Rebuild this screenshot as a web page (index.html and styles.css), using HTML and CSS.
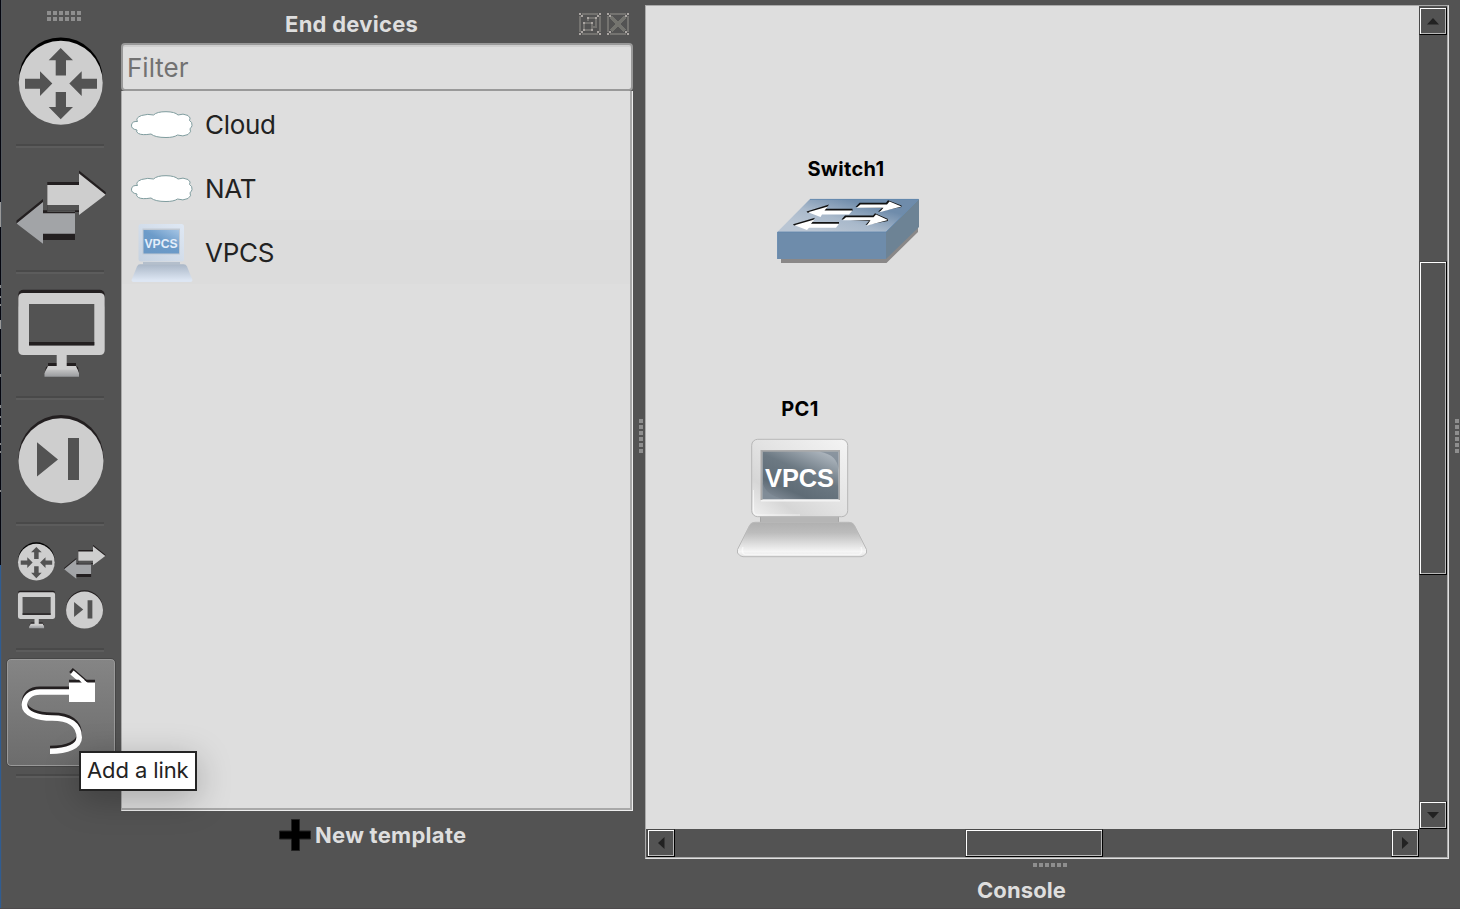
FILE: index.html
```
<!DOCTYPE html>
<html lang="en">
<head>
<meta charset="utf-8">
<title>Network topology</title>
<link rel="stylesheet" href="styles.css">
</head>
<body>
<svg class="defs" width="0" height="0">
  <defs>
    <linearGradient id="foot" x1="0" y1="0" x2="0" y2="1"><stop offset="0" stop-color="#c4c4c5"/><stop offset="1" stop-color="#999b9e"/></linearGradient>
    <linearGradient id="top" x1="0" y1="0.6" x2="0.75" y2="0"><stop offset="0" stop-color="#b9c5d3"/><stop offset="0.35" stop-color="#a9b9cb"/><stop offset="0.8" stop-color="#6f8cab"/></linearGradient>
    <linearGradient id="case" x1="1" y1="0" x2="0" y2="1"><stop offset="0" stop-color="#f4f4f4"/><stop offset="0.5" stop-color="#e2e2e2"/><stop offset="0.75" stop-color="#d6d6d6"/><stop offset="0.95" stop-color="#ececec"/></linearGradient>
    <linearGradient id="base" x1="0" y1="0" x2="0" y2="1"><stop offset="0" stop-color="#b0b0b0"/><stop offset="0.3" stop-color="#bcbcbc"/><stop offset="0.85" stop-color="#f5f5f5"/><stop offset="1" stop-color="#e4e4e4"/></linearGradient>
    <linearGradient id="glass" x1="0.9" y1="0" x2="0.2" y2="1"><stop offset="0" stop-color="#b4bcc4"/><stop offset="0.45" stop-color="#6c7983"/><stop offset="0.8" stop-color="#5f6c76"/><stop offset="1" stop-color="#7d8893"/></linearGradient>
    <linearGradient id="case-blue" x1="1" y1="0" x2="0" y2="1"><stop offset="0" stop-color="#dfe8f4"/><stop offset="1" stop-color="#c6d2e0"/></linearGradient>
    <linearGradient id="base-blue" x1="0" y1="0" x2="0" y2="1"><stop offset="0" stop-color="#aab7c7"/><stop offset="0.9" stop-color="#dde6f3"/></linearGradient>
    <linearGradient id="glass-blue" x1="1" y1="0" x2="0.2" y2="1"><stop offset="0" stop-color="#a4c4e4"/><stop offset="0.5" stop-color="#6c9bc9"/><stop offset="1" stop-color="#6a98c5"/></linearGradient>
    <g id="router">
      <circle cx="60.8" cy="79.4" r="42" fill="#000"/>
      <circle cx="60.8" cy="82.7" r="42" fill="#cecece"/>
      <path fill="#535353" d="M60.7 48 73 60.3H66V75.5H55.7V60.3H48.7ZM60.7 119.3 73 107H66V92H55.7V107H48.7ZM52.3 83.5 40 71.3V78.7H25V88.7H40V96ZM69.3 83.5 81.7 71.3V78.7H97V88.7H81.7V96Z"/>
    </g>
    <g id="switch">
      <path fill="#231f20" d="M47.3 182H79V170.5L105.7 192V195L79 212H47.3ZM75 210.3H43V199L16.5 220.5V223.5L43 240H75Z"/>
      <path fill="#535353" d="M47.3 205H79V210.3H47.3Z"/>
      <path fill="#cecece" d="M47.3 185H79V173.5L105.7 194.7 79 215V205H47.3Z"/>
      <path fill="#a2a4a7" d="M75 213.3H43V202L16.5 223.5 43 243.7V233.7H75Z"/>
    </g>
    <g id="monitor">
      <rect x="18.3" y="289.7" width="86.4" height="20" rx="5" fill="#231f20"/>
      <path fill="#535353" d="M28 303H95V346H28Z"/>
      <path fill="#231f20" d="M48 363H76V366L78 367 79 373H44.7L46 367 48 366Z"/>
      <path fill="#cecece" fill-rule="evenodd" d="M23.3 293H99.7Q104.7 293 104.7 298V350Q104.7 355 99.7 355H66.7V366H76L78 371V376H45.5V371L48 366H56.7V355H23.3Q18.3 355 18.3 350V298Q18.3 293 23.3 293ZM29 304V345.3H94.3V304Z"/>
      <path fill="#231f20" d="M29 342H94.3V345.4H29Z"/>
      <path fill="url(#foot)" d="M46.500 369.500H77.500L79 373V376.7H44.5V373Z"/>
    </g>
    <g id="play">
      <circle cx="61" cy="457.5" r="42.5" fill="#231f20"/>
      <circle cx="61" cy="460.7" r="42.5" fill="#cecece"/>
      <path fill="#535353" d="M37 442.3 58 459.5 37 476.5ZM68 438H79V480H68Z"/>
    </g>
    <g id="cloud">
      <path fill="#fff" stroke="#7f9c9e" stroke-width="1" d="M6 19Q0 18 .5 14Q1 10 6.500 10.500Q4 7 10.500 4.500Q17 2.500 22.500 4Q26 .6 35 .7Q44 .8 47 4Q52 2 57 4.500Q60.500 7 58.500 9.500Q61.500 11 61 14.500Q60.500 17 59 17.500Q61 21 57 23.500Q52 26 46.500 24Q43 26.500 35 26.500Q24 26.500 20 23Q11 24.500 7.500 22.500Q4.500 21 6 19Z"/>
    </g>
  </defs>
</svg>
<div class="app">
  <div class="edge"></div>
  <nav class="toolbar">
    <div class="grip grip-double"></div>
    <svg class="tool" viewBox="2 22 119 122"><use href="#router"/></svg>
    <div class="sep"></div>
    <svg class="tool" viewBox="2 148 119 122"><use href="#switch"/></svg>
    <div class="sep"></div>
    <svg class="tool" viewBox="2 274 119 122"><use href="#monitor"/></svg>
    <div class="sep"></div>
    <svg class="tool" viewBox="2 400 119 122"><use href="#play"/></svg>
    <div class="sep"></div>
    <svg class="tool" viewBox="2 526 119 122">
      <use href="#router" transform="translate(9.8 526) scale(.437)"/>
      <use href="#switch" transform="translate(56.4 465.800) scale(.463)"/>
      <use href="#monitor" transform="translate(10.1 466.300) scale(.43)"/>
      <use href="#play" transform="translate(58 409.700) scale(.435)"/>
    </svg>
    <div class="sep"></div>
    <div class="tool link-slot">
      <div class="link-button">
        <svg width="106" height="105" viewBox="8 660 106 105">
          <g fill="none" stroke-width="5.600">
            <path stroke="#231f20" d="M69 689.300H40C30 689.300 24.500 695 24.500 702.300C24.500 711 38 715.200 52 715.200C70 715.200 79.200 722 79.200 734.500C79.200 743 68 748.600 50 748.600M71 670 86 683"/>
            <path stroke="#fff" d="M69 692H40C30 692 24.500 698 24.500 705C24.500 714 38 718 52 718C70 718 79.200 725 79.200 737.500C79.200 746 68 751.300 50 751.300"/>
            <path stroke="#fff" stroke-width="5" d="M72 672.500 86 684.500"/>
          </g>
          <path fill="#231f20" d="M69 679.700H79L82 683H69ZM84 679.700H95V683H88Z"/>
          <path fill="#fff" d="M69 682.500H95V702H69Z"/>
        </svg>
      </div>
      <div class="tooltip"><span>Add a link</span></div>
    </div>
    <div class="sep"></div>
  </nav>
  <section class="dock">
    <header class="dock-title">
      <h1>End devices</h1>
      <svg width="51" height="23" viewBox="579 13 51 23" fill="none" shape-rendering="crispEdges">
        <path stroke="#747370" stroke-width="2" d="M582 14H598M582 34H598M580 16V32M600 16V32M610 14H626M610 34H626M608 16V32M628 16V32M584 23H592V30H584ZM588 21V18H596V27H593"/>
        <path stroke="#74746f" stroke-width="4" d="M611 17 625 31M625 17 611 31"/>
        <path fill="#aaa5a2" d="M579 13h2v2h-2zM599 13h2v2h-2zM579 33h2v2h-2zM599 33h2v2h-2zM607 13h2v2h-2zM627 13h2v2h-2zM607 33h2v2h-2zM627 33h2v2h-2zM581 15h2v2h-2zM597 15h2v2h-2zM581 31h2v2h-2zM597 31h2v2h-2zM609 15h2v2h-2zM625 15h2v2h-2zM609 31h2v2h-2zM625 31h2v2h-2zM583 22h2v2h-2zM591 22h2v2h-2zM583 29h2v2h-2zM591 29h2v2h-2zM587 17h2v2h-2zM595 17h2v2h-2z"/>
      </svg>
    </header>
    <input class="filter" placeholder="Filter" aria-label="Filter">
    <ul class="devices">
      <li><svg width="62" height="62"><use href="#cloud" y="18"/></svg><span>Cloud</span></li>
      <li><svg width="62" height="62"><use href="#cloud" y="18"/></svg><span>NAT</span></li>
      <li class="hover"><svg width="62" height="62" viewBox="131 222 62 62">
        <rect x="138.500" y="225" width="45.500" height="37.500" rx="2.500" fill="url(#case-blue)"/>
        <path fill="#b4bfcc" d="M143 263H180V265.500H143Z"/>
        <rect x="142.500" y="229.500" width="37.500" height="26" fill="#c1c9d3"/>
        <rect x="143.500" y="231" width="35.500" height="23.500" fill="url(#glass-blue)"/>
        <path fill="url(#base-blue)" d="M140 265.300H183.500Q186 265.300 187 267.500L192.500 281Q192.500 283 190.500 283H133.500Q131.500 283 131.500 281L137 267.500Q138 265.300 140 265.300Z"/>
        <text x="144.500" y="249" textLength="33" lengthAdjust="spacingAndGlyphs" class="vpcs-small">VPCS</text>
      </svg><span>VPCS</span></li>
    </ul>
    <div class="new-template">
      <svg width="32" height="32" viewBox="0 0 32 32"><path stroke="#222" d="M12.500.5H20.500V12H31.500V20H20.500V31.500H12.500V20H.5V12H12.500Z"/></svg>
      <span>New template</span>
    </div>
  </section>
  <div class="splitter"><div class="grip grip-v"></div></div>
  <main class="main">
    <div class="view">
      <div class="canvas">
        <div class="node node-switch">
          <span class="label">Switch1</span>
          <svg width="144" height="68" viewBox="776 197 144 68">
            <path fill="#8a8888" d="M781 258H886L918 226V232L886.500 263H781Z"/>
            <path fill="url(#top)" d="M810 199H919L886 232H777.300Z"/>
            <path fill="#6e8cab" d="M777.300 232H886V259H777.300Z"/>
            <path fill="#6d8395" d="M919 199V227L886 259V232Z"/>
            <path fill="none" stroke="#5f86ad" stroke-width=".8" d="M810 199.400H918.500L886 232H777.700V259"/>
            <path fill="#111" d="M806.500 211.500 829 204.500 826 208.800H852.500V211L808 213ZM793 224.300 815 217.800 812 222H839V224L794 225.500ZM855.500 207 859.500 202.800H886L888 200.200 901.500 205.500V207L878 211.800 882 208ZM841.500 219.500 845 215.500H873L875 213.300 888 219V221L865.500 225 869 221Z"/>
            <path fill="#fff" d="M808 212.300 828 206.500 824.500 210.600H852.500L849 214.500H822L820.500 217ZM794.500 225.300 814.500 219.500 811 223.800H839L836 227.800H809L807 230ZM856.500 207.800 860.500 204.500H887L889.500 201.500 901.500 206.500 879.500 212.300 883.500 207.800ZM842.500 220.300 846 217.300H873.500L876 214.500 888 220 866.500 225.800 870.500 220.300Z"/>
          </svg>
        </div>
        <div class="node node-pc">
          <span class="label">PC1</span>
          <svg width="132" height="120" viewBox="736 438 132 120">
            <path fill="#b5b5b5" stroke="#a5a5a5" d="M760.500 515H838.500V523H760.500Z"/>
            <rect x="751.700" y="439.300" width="96" height="77.400" rx="6" fill="url(#case)" stroke="#b7b7b7"/>
            <path fill="none" stroke="#fff" stroke-opacity=".6" d="M753.500 490V510Q753.500 515 758 515H800"/>
            <rect x="761" y="450" width="79" height="51.500" fill="#f3f3f3"/>
            <path fill="#aaa" d="M760.500 450H840V500H838.500V452H762.500V500H760.500Z"/>
            <rect x="762.500" y="451.700" width="76" height="47.500" fill="url(#glass)"/>
            <path fill="#84909b" fill-opacity=".55" d="M762.500 482Q765 495 784 499.200H762.500Z"/>
            <path fill="#7f8b96" fill-opacity=".8" d="M820 451.700H838.500V470Q838 455 820 451.700Z"/>
            <path fill="url(#base)" stroke="#b9b9b9" d="M755 522.300H849Q853 522.300 854.500 525.500L866.500 549.500V553Q864 556.700 861 556.700H743Q740 556.700 737.500 553V549.500L749.500 525.500Q751 522.300 755 522.300Z"/>
            <path fill="none" stroke="#fff" stroke-opacity=".55" stroke-width="1.500" d="M743 547Q741 553 745 554.500H859Q863 553 861 547"/>
            <text x="765" y="487" textLength="69" lengthAdjust="spacingAndGlyphs" class="vpcs">VPCS</text>
          </svg>
        </div>
      </div>
      <div class="vbar">
        <div class="bevel btn"><svg width="12" height="7"><path d="M6 0 12 6.500H0Z"/></svg></div>
        <div class="bevel vthumb"></div>
        <div class="bevel btn"><svg width="12" height="7"><path d="M0 0H12L6 6.500Z"/></svg></div>
      </div>
      <div class="hbar">
        <div class="bevel btn"><svg width="7" height="12"><path d="M6.500 0V12L0 6Z"/></svg></div>
        <div class="bevel hthumb"></div>
        <div class="bevel btn"><svg width="7" height="12"><path d="M0 0V12L6.500 6Z"/></svg></div>
      </div>
      <div class="corner"></div>
    </div>
    <div class="grip grip-h"></div>
    <h2 class="console">Console</h2>
  </main>
  <div class="right-edge"><div class="grip grip-v"></div></div>
</div>
</body>
</html>
```

FILE: styles.css
```
* { box-sizing: border-box; }
body {
  margin: 0;
  background: #535353;
  font-family: Inter, "Liberation Sans", sans-serif;
  overflow: hidden;
}
svg { display: block; flex: none; }
.defs { position: absolute; }
.app {
  display: flex;
  width: 1460px;
  height: 909px;
  border-bottom: 1px solid #4d4a4c;
}
.edge {
  width: 2px;
  flex: none;
  border-right: 1px solid #51565c;
  background: linear-gradient(#05060f 202px, #999 202px, #999 227px, #05060f 227px, #05060f 285px, #888 285px, #888 288px, #05060f 288px, #05060f 296px, #888 296px, #888 298px, #05060f 298px, #05060f 304px, #888 304px, #888 306px, #05060f 306px, #05060f 320px, #999 320px, #999 329px, #05060f 329px, #05060f 374px, #888 374px, #888 377px, #05060f 377px, #05060f 405px, #888 405px, #888 408px, #05060f 408px, #05060f 416px, #888 416px, #888 418px, #05060f 418px, #05060f 425px, #888 425px, #888 427px, #05060f 427px, #05060f 443px, #888 443px, #888 445px, #05060f 445px, #05060f 451px, #888 451px, #888 453px, #05060f 453px, #05060f 490px, #888 490px, #888 492px, #05060f 492px, #05060f 565px, #2f5c91 565px);
}

/* Device toolbar */
.toolbar {
  width: 119px;
  flex: none;
  display: flex;
  flex-direction: column;
  padding-top: 11px;
}
.tool { width: 119px; height: 122px; flex: none; }
.sep {
  width: 88px;
  height: 4px;
  flex: none;
  margin-left: 14px;
  border-top: 2px solid #494949;
  border-bottom: 2px solid #5c5c5c;
}
.grip { flex: none; }
.grip-double, .grip-h {
  width: 34px;
  background: repeating-linear-gradient(90deg, #8e8e8e 0 4px, #535353 4px 6px);
}
.grip-double {
  height: 10px;
  margin: 0 0 1px 45px;
  -webkit-mask: linear-gradient(#000 4px, transparent 4px 6px, #000 6px);
  mask: linear-gradient(#000 4px, transparent 4px 6px, #000 6px);
}
.grip-h { height: 4px; }
.grip-v {
  width: 4px;
  height: 34px;
  background: repeating-linear-gradient(#8e8e8e 0 4px, #535353 4px 6px);
}
.link-slot { position: relative; padding: 6px 0 0 4px; }
.link-button {
  width: 110px;
  height: 109px;
  border: 1px solid #464646;
  border-radius: 5px;
  background: linear-gradient(#858585, #6c6c6c);
  box-shadow: inset 0 0 0 1px #999;
  padding: 1px;
}
.tooltip {
  position: absolute;
  left: 77px;
  top: 99px;
  z-index: 2;
  width: 118px;
  height: 40px;
  border: 2px solid #242424;
  background: #fff;
  color: #232323;
  font-size: 22px;
  line-height: 35px;
  padding-left: 6px;
  white-space: nowrap;
  box-shadow: 0 8px 34px rgba(0, 0, 0, .25);
}
.tooltip span { letter-spacing: -.1px; }

/* Template dock */
.dock {
  width: 512px;
  flex: none;
  display: flex;
  flex-direction: column;
}
.dock-title {
  height: 43px;
  flex: none;
  display: flex;
  justify-content: space-between;
  padding: 13px 3px 0 164px;
}
h1, h2, .new-template {
  margin: 0;
  font-size: 22px;
  line-height: 24px;
  font-weight: 700;
  color: #dedede;
  white-space: nowrap;
}
.dock-title h1 { margin-top: -1px; letter-spacing: .27px; }
.filter {
  height: 48px;
  width: 512px;
  flex: none;
  border: 2px solid #999;
  border-radius: 4px;
  background: #dedede;
  box-shadow: inset 0 2px #cfcfcf;
  padding: 1px 4px 0;
  font: 26px Inter, sans-serif;
  outline: 0;
}
.filter::placeholder { color: #727272; opacity: 1; }
.devices {
  list-style: none;
  margin: 0;
  padding: 1px 0 0;
  height: 720px;
  flex: none;
  background: #dedede;
  border-left: 1px solid #aaa;
  border-right: 1px solid #eee;
  border-bottom: 1px solid #eee;
  box-shadow: inset -2px -2px #a8a8a8;
}
.devices li {
  height: 64px;
  display: flex;
  align-items: center;
  gap: 12px;
  padding-left: 9px;
  margin-right: 2px;
  font-size: 26px;
  letter-spacing: -.3px;
  color: #222;
}
.devices li.hover { background: #dcdcdc; }
.new-template {
  display: flex;
  align-items: center;
  gap: 4px;
  padding: 8px 0 0 158px;
  letter-spacing: .28px;
}
.vpcs, .vpcs-small {
  font-family: "Liberation Sans", sans-serif;
  font-weight: 700;
  font-size: 26px;
  letter-spacing: 0;
  fill: #fff;
}
.vpcs-small { font-size: 12px; fill: #e4eefa; }

.splitter { width: 12px; flex: none; padding: 419px 0 0 6px; }
.right-edge { width: 11px; flex: none; padding: 419px 0 0 6px; }

/* Topology view */
.main {
  width: 804px;
  flex: none;
  padding-top: 5px;
  display: flex;
  flex-direction: column;
}
.view {
  height: 854px;
  flex: none;
  display: grid;
  grid-template: 823px 29px / 773px 29px;
  border: 1px solid #aaa;
  border-right-color: #e0e0e0;
  border-bottom-color: #e0e0e0;
  box-shadow: inset -1px -1px #aaa;
}
.canvas { position: relative; background: #dedede; }
.node { position: absolute; }
.node-switch { left: 130px; top: 150px; }
.node-pc { left: 90px; top: 390px; }
.label {
  display: block;
  text-align: center;
  font-size: 20px;
  line-height: 26px;
  font-weight: 700;
  letter-spacing: .35px;
  color: #000;
}
.node-switch .label { padding-right: 4px; margin-bottom: 15px; }
.node-pc .label { padding-right: 4px; margin-bottom: 16px; }
.vbar { display: flex; flex-direction: column; padding-top: 1px; }
.hbar { display: flex; padding-left: 1px; }
.bevel {
  flex: none;
  width: 28px;
  height: 28px;
  border: 1px solid #000;
  border-top-color: #484848;
  border-left-color: #484848;
  box-shadow: inset 1px 1px #fff, inset -1px -1px #b8b8b8;
}
.btn { display: flex; align-items: center; justify-content: center; fill: #222; }
.vthumb { height: 314px; margin: 226px 0; }
.hthumb { width: 138px; margin: 0 288px 0 290px; }
.grip-h { margin: 4px 0 0 388px; }
.console { margin: 11px 0 0 332px; letter-spacing: .1px; }
```
